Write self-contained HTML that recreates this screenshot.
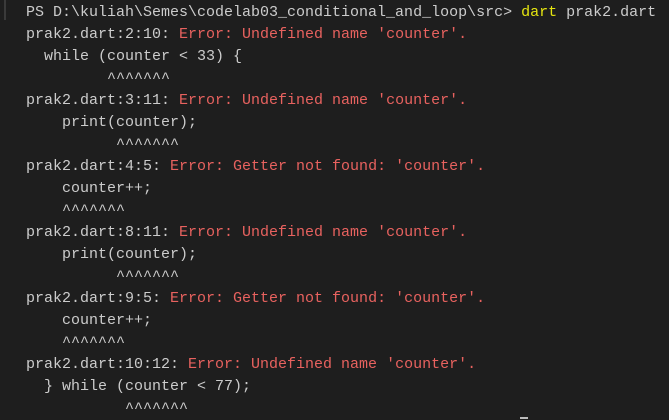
<!DOCTYPE html>
<html><head><meta charset="utf-8"><style>
html,body{margin:0;padding:0;background:#1e1e1e;width:669px;height:419px;overflow:hidden}
pre{margin:0;position:absolute;left:26px;top:2px;font-family:"Liberation Mono",monospace;font-size:15px;line-height:22px;color:#cccccc;white-space:pre}
.r{color:#e8625f}.y{color:#e5e510}
.bar{position:absolute;left:4px;top:0;width:2px;height:20px;background:#3a3a3a}
.cur{position:absolute;left:520px;top:417px;width:8px;height:2px;background:#bbb}
</style></head><body>
<div class="bar"></div>
<pre>PS D:\kuliah\Semes\codelab03_conditional_and_loop\src&gt; <span class="y">dart</span> prak2.dart
prak2.dart:2:10: <span class="r">Error: Undefined name 'counter'.</span>
  while (counter &lt; 33) {
         ^^^^^^^
prak2.dart:3:11: <span class="r">Error: Undefined name 'counter'.</span>
    print(counter);
          ^^^^^^^
prak2.dart:4:5: <span class="r">Error: Getter not found: 'counter'.</span>
    counter++;
    ^^^^^^^
prak2.dart:8:11: <span class="r">Error: Undefined name 'counter'.</span>
    print(counter);
          ^^^^^^^
prak2.dart:9:5: <span class="r">Error: Getter not found: 'counter'.</span>
    counter++;
    ^^^^^^^
prak2.dart:10:12: <span class="r">Error: Undefined name 'counter'.</span>
  } while (counter &lt; 77);
           ^^^^^^^</pre>
<div class="cur"></div>
</body></html>
